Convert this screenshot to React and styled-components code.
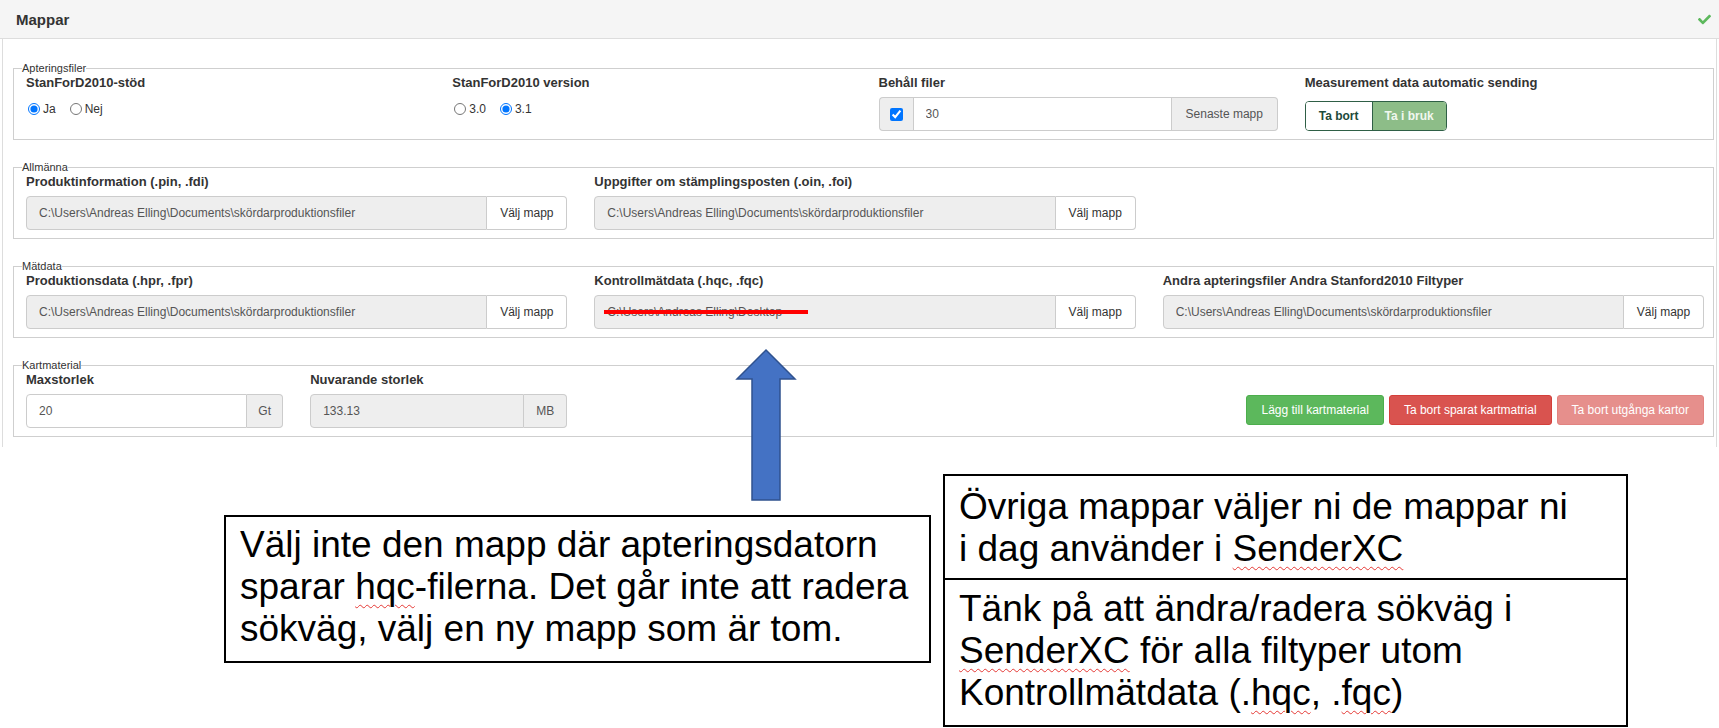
import React from "react";
import styled, { createGlobalStyle } from "styled-components";
import { FaCheck } from "react-icons/fa";

const GlobalStyle = createGlobalStyle`
  html, body {
    margin: 0;
    padding: 0;
    background: #fff;
  }
  body {
    font-family: "Liberation Sans", Arial, sans-serif;
    color: #333;
  }
  * {
    box-sizing: border-box;
  }
`;

const Page = styled.div`
  position: relative;
  width: 1719px;
  height: 728px;
  overflow: hidden;
`;

const Panel = styled.section`
  margin: 0 2px;
  border: 1px solid #ddd;
  border-top: none;
  border-bottom: none;
  padding-bottom: 10px;
`;

const PanelHeading = styled.header`
  display: flex;
  align-items: center;
  justify-content: space-between;
  height: 39px;
  margin: 0 -3px;
  padding: 0 8px 0 16px;
  background: #f5f5f5;
  border-bottom: 1px solid #ddd;
`;

const PanelTitle = styled.h3`
  margin: 0;
  font-size: 15px;
  font-weight: bold;
  color: #333;
`;

const PanelBody = styled.div`
  padding-top: 23px;
`;

const Group = styled.fieldset`
  margin: ${(p) => (p.$first ? "0" : "21px")} 2px 0 10px;
  padding: 0 9px 8px 12px;
  border: 1px solid #cfcfcf;
  min-width: 0;
`;

const Legend = styled.legend`
  padding: 0;
  margin-left: -4px;
  font-size: 11px;
  line-height: 13px;
  color: #333;
`;

const Grid = styled.div`
  display: grid;
  grid-template-columns: repeat(${(p) => p.$cols}, 1fr);
  column-gap: 27px;
`;

const Field = styled.div`
  display: flex;
  flex-direction: column;
  min-width: 0;
`;

const FieldLabel = styled.div`
  font-size: 13px;
  font-weight: bold;
  line-height: 16px;
  margin-bottom: 6px;
  color: #333;
  white-space: nowrap;
`;

const RadioRow = styled.div`
  display: flex;
  align-items: center;
  gap: 14px;
  height: 24px;
  padding-left: 2px;
`;

const RadioLabel = styled.label`
  display: inline-flex;
  align-items: center;
  gap: 3px;
  font-size: 12px;
  color: #333;

  input {
    margin: 0;
    width: 12px;
    height: 12px;
  }
`;

const InputGroup = styled.div`
  position: relative;
  display: flex;
  height: 34px;
`;

const TextInput = styled.input`
  flex: 1;
  min-width: 0;
  height: 34px;
  padding: 0 12px;
  font-family: "Liberation Sans", Arial, sans-serif;
  font-size: 12px;
  color: #555;
  background: ${(p) => (p.disabled ? "#eee" : "#fff")};
  border: 1px solid #ccc;
  border-radius: ${(p) => (p.$leftAddon ? "0" : "4px 0 0 4px")};
  outline: none;
  opacity: 1;
`;

const Addon = styled.span`
  display: flex;
  align-items: center;
  justify-content: center;
  width: ${(p) => p.$width}px;
  font-size: 12px;
  color: ${(p) => (p.$button ? "#333" : "#555")};
  background: ${(p) => (p.$button ? "#fff" : "#eee")};
  border: 1px solid #ccc;
  border-left: none;
  border-radius: 0 4px 4px 0;
  white-space: nowrap;
`;

const CheckAddon = styled.span`
  display: flex;
  align-items: center;
  justify-content: center;
  width: 34px;
  background: #eee;
  border: 1px solid #ccc;
  border-right: none;
  border-radius: 4px 0 0 4px;

  input {
    margin: 0;
    width: 13px;
    height: 13px;
  }
`;

const Strike = styled.span`
  position: absolute;
  left: 10px;
  top: 15px;
  width: 204px;
  height: 4px;
  background: #ff0000;
`;

const Toggle = styled.div`
  display: inline-flex;
  align-self: flex-start;
  margin-top: 4px;
  border: 1px solid #2f5f46;
  border-radius: 4px;
  overflow: hidden;
`;

const ToggleButton = styled.button`
  height: 28px;
  padding: 0 ${(p) => (p.$active ? 12 : 13)}px;
  font-family: "Liberation Sans", Arial, sans-serif;
  font-size: 12px;
  font-weight: bold;
  border: none;
  border-left: ${(p) => (p.$active ? "1px solid #2f5f46" : "none")};
  background: ${(p) => (p.$active ? "#8dbd88" : "#fff")};
  color: ${(p) => (p.$active ? "#f1f7ef" : "#1d4a3b")};
`;

const Actions = styled.div`
  grid-column: 3 / -1;
  display: flex;
  justify-content: flex-end;
  align-items: flex-end;
  gap: 5px;
  padding-bottom: 3px;
`;

const tones = {
  success: { bg: "#5cb85c", border: "#4cae4c" },
  danger: { bg: "#d9534f", border: "#d43f3a" },
  faded: { bg: "#e68f8c", border: "#e28380" },
};

const ActionButton = styled.button`
  height: 30px;
  padding: 0 14px;
  font-family: "Liberation Sans", Arial, sans-serif;
  font-size: 12px;
  color: #fff;
  background: ${(p) => tones[p.$tone].bg};
  border: 1px solid ${(p) => tones[p.$tone].border};
  border-radius: 3px;
  white-space: nowrap;
`;

const Callout = styled.div`
  position: absolute;
  left: ${(p) => p.$left}px;
  top: ${(p) => p.$top}px;
  width: ${(p) => p.$width}px;
  height: ${(p) => p.$height}px;
  padding: ${(p) => p.$padTop}px 14px 0 14px;
  border: 2px solid #000;
  background: #fff;
  font-family: "Liberation Sans", Arial, sans-serif;
  font-size: 37px;
  line-height: 42px;
  color: #000;
  white-space: nowrap;
`;

const Squiggle = styled.span`
  text-decoration: underline wavy #e53935;
  text-decoration-thickness: 1px;
  text-underline-offset: 5px;
`;

const Arrow = styled.svg`
  position: absolute;
  left: 734px;
  top: 348px;
`;

const PathField = ({ label, value, strike }) => (
  <Field>
    <FieldLabel>{label}</FieldLabel>
    <InputGroup>
      <TextInput value={value} disabled readOnly />
      <Addon $button $width={80}>Välj mapp</Addon>
      {strike && <Strike />}
    </InputGroup>
  </Field>
);

const docs = "C:\\Users\\Andreas Elling\\Documents\\skördarproduktionsfiler";

export default function App() {
  return (
    <Page>
      <GlobalStyle />
      <Panel>
        <PanelHeading>
          <PanelTitle>Mappar</PanelTitle>
          <FaCheck size={13} color="#5cb85c" />
        </PanelHeading>
        <PanelBody>
          <Group $first>
            <Legend>Apteringsfiler</Legend>
            <Grid $cols={4}>
              <Field>
                <FieldLabel>StanForD2010-stöd</FieldLabel>
                <RadioRow>
                  <RadioLabel>
                    <input type="radio" name="stod" defaultChecked /> Ja
                  </RadioLabel>
                  <RadioLabel>
                    <input type="radio" name="stod" /> Nej
                  </RadioLabel>
                </RadioRow>
              </Field>
              <Field>
                <FieldLabel>StanForD2010 version</FieldLabel>
                <RadioRow>
                  <RadioLabel>
                    <input type="radio" name="ver" /> 3.0
                  </RadioLabel>
                  <RadioLabel>
                    <input type="radio" name="ver" defaultChecked /> 3.1
                  </RadioLabel>
                </RadioRow>
              </Field>
              <Field>
                <FieldLabel>Behåll filer</FieldLabel>
                <InputGroup>
                  <CheckAddon>
                    <input type="checkbox" defaultChecked />
                  </CheckAddon>
                  <TextInput $leftAddon defaultValue="30" />
                  <Addon $width={106}>Senaste mapp</Addon>
                </InputGroup>
              </Field>
              <Field>
                <FieldLabel>Measurement data automatic sending</FieldLabel>
                <Toggle>
                  <ToggleButton>Ta bort</ToggleButton>
                  <ToggleButton $active>Ta i bruk</ToggleButton>
                </Toggle>
              </Field>
            </Grid>
          </Group>

          <Group>
            <Legend>Allmänna</Legend>
            <Grid $cols={3}>
              <PathField label="Produktinformation (.pin, .fdi)" value={docs} />
              <PathField label="Uppgifter om stämplingsposten (.oin, .foi)" value={docs} />
            </Grid>
          </Group>

          <Group>
            <Legend>Mätdata</Legend>
            <Grid $cols={3}>
              <PathField label="Produktionsdata (.hpr, .fpr)" value={docs} />
              <PathField
                label="Kontrollmätdata (.hqc, .fqc)"
                value="C:\Users\Andreas Elling\Desktop"
                strike
              />
              <PathField label="Andra apteringsfiler Andra Stanford2010 Filtyper" value={docs} />
            </Grid>
          </Group>

          <Group>
            <Legend>Kartmaterial</Legend>
            <Grid $cols={6}>
              <Field>
                <FieldLabel>Maxstorlek</FieldLabel>
                <InputGroup>
                  <TextInput defaultValue="20" />
                  <Addon $width={36}>Gt</Addon>
                </InputGroup>
              </Field>
              <Field>
                <FieldLabel>Nuvarande storlek</FieldLabel>
                <InputGroup>
                  <TextInput value="133.13" disabled readOnly />
                  <Addon $width={43}>MB</Addon>
                </InputGroup>
              </Field>
              <Actions>
                <ActionButton $tone="success">Lägg till kartmaterial</ActionButton>
                <ActionButton $tone="danger">Ta bort sparat kartmatrial</ActionButton>
                <ActionButton $tone="faded">Ta bort utgånga kartor</ActionButton>
              </Actions>
            </Grid>
          </Group>
        </PanelBody>
      </Panel>

      <Arrow width="64" height="156" viewBox="0 0 64 156">
        <polygon
          points="32,2 61,31 46,31 46,152 18,152 18,31 3,31"
          fill="#4472c4"
          stroke="#2f528f"
          strokeWidth="1.5"
        />
      </Arrow>

      <Callout $left={224} $top={515} $width={707} $height={148} $padTop={7}>
        Välj inte den mapp där apteringsdatorn
        <br />
        sparar <Squiggle>hqc</Squiggle>-filerna. Det går inte att radera
        <br />
        sökväg, välj en ny mapp som är tom.
      </Callout>

      <Callout $left={943} $top={474} $width={685} $height={106} $padTop={10}>
        Övriga mappar väljer ni de mappar ni
        <br />
        i dag använder i <Squiggle>SenderXC</Squiggle>
      </Callout>

      <Callout $left={943} $top={578} $width={685} $height={149} $padTop={8}>
        Tänk på att ändra/radera sökväg i
        <br />
        <Squiggle>SenderXC</Squiggle> för alla filtyper utom
        <br />
        Kontrollmätdata (.<Squiggle>hqc</Squiggle>, .<Squiggle>fqc</Squiggle>)
      </Callout>
    </Page>
  );
}
